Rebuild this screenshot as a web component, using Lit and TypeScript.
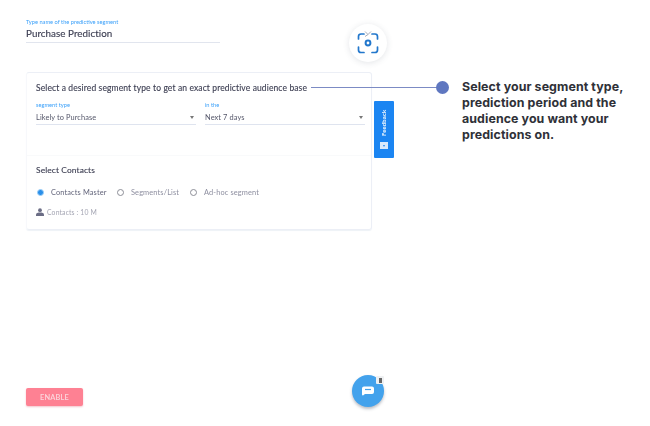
import { LitElement, html, css } from "lit";
import { customElement } from "lit/decorators.js";

@customElement("app-root")
export class AppRoot extends LitElement {
  static styles = css`
    :host { display: block; position: relative; width: 650px; height: 426px; overflow: hidden; background: #fff; font-family: "Lato", "Open Sans", sans-serif; }
    .main { box-sizing: border-box; height: 426px; width: 372px; padding: 19px 0 20px 26px; display: flex; flex-direction: column; }
    .name { width: 194px; border-bottom: 1px solid #e1e5ee; height: 23px; margin-bottom: 29px; filter: blur(0.35px); }
    .tiny { font-size: 5.7px; line-height: 6px; color: #3aa0fa; display: block; }
    .name b { display: block; font-weight: 400; font-size: 9.8px; line-height: 14px; margin-top: 1px; color: #3c3e52; letter-spacing: 0.05px; -webkit-text-stroke: 0.15px #3c3e52; }
    .card { box-sizing: border-box; width: 346px; height: 158px; border: 1px solid #eceff6; border-left-color: #f7f8fb; border-radius: 3px; box-shadow: 0 1px 1px #eef2f7; display: flex; flex-direction: column; filter: blur(0.35px); }
    .top { box-sizing: border-box; height: 83px; padding: 10px 7px 0 9px; border-bottom: 1px solid #f9fafb; }
    .title { font-size: 8.5px; line-height: 11px; color: #3c3e52; letter-spacing: 0.12px; white-space: nowrap; -webkit-text-stroke: 0.12px #3c3e52; }
    .fields { display: grid; grid-template-columns: 160px 160px; gap: 9px; margin-top: 8px; }
    .field { height: 22px; border-bottom: 1px solid #dfe4ef; }
    .value { display: flex; justify-content: space-between; align-items: center; font-size: 7.4px; line-height: 11px; color: #55576a; letter-spacing: 0.1px; margin-top: 4px; }
    .caret { width: 0; height: 0; border: 2.5px solid transparent; border-top: 3px solid #777; border-bottom: 0; margin-right: 2px; }
    .bottom { padding: 9px 9px 0 9px; }
    .sub { font-size: 8.4px; line-height: 11px; color: #3c3e52; letter-spacing: 0.12px; -webkit-text-stroke: 0.12px #3c3e52; }
    .radios { display: flex; align-items: center; margin: 10px 0 0 1px; height: 12px; font-size: 7.4px; color: #8e8fa0; letter-spacing: 0.13px; }
    .radio { box-sizing: border-box; width: 7px; height: 7px; border-radius: 50%; border: 1px solid #8b8d96; margin-right: 7px; flex: none; }
    .radio.on { border: 1.5px solid #9fd0f8; background: #2a8fe9; }
    .r1 { width: 55px; color: #62647a; white-space: nowrap; margin-right: 11px; }
    .r2 { width: 48px; white-space: nowrap; margin-right: 11px; }
    .contacts { display: flex; align-items: center; gap: 3px; margin-top: 8px; height: 12px; font-size: 6.8px; color: #a4a5b3; letter-spacing: 0.15px; }
    .enable { margin-top: auto; box-sizing: border-box; width: 57px; height: 18px; border: 0; border-radius: 2px; padding: 0; background: #fe8193; color: #fbd6dc; font: 600 7.4px "Lato", sans-serif; letter-spacing: 0.2px; box-shadow: 0 1px 2px #f3c5cc; filter: blur(0.3px); }
    .shot { position: absolute; left: 349px; top: 24px; width: 38px; height: 38px; border-radius: 50%; background: #fff; box-shadow: 0 1px 6px rgba(60, 70, 90, 0.14); display: flex; align-items: center; justify-content: center; }
    .feedback { position: absolute; left: 374px; top: 101px; box-sizing: border-box; width: 20px; height: 57px; background: #1b85f2; border-radius: 1px; display: flex; flex-direction: column; align-items: center; padding-top: 7px; }
    .feedback span { writing-mode: vertical-rl; transform: rotate(180deg); font: 900 5.8px "Lato", sans-serif; color: #eef6fe; letter-spacing: 0.2px; height: 29px; text-align: center; line-height: 8px; }
    .mail { width: 8px; height: 7px; background: #d9e9fb; margin-top: 5px; display: flex; justify-content: center; align-items: center; }
    .mail i { width: 0; height: 0; border: 1.5px solid transparent; border-top: 2px solid #1b85f2; border-bottom: 0; }
    .line { position: absolute; left: 311px; top: 87px; width: 127px; height: 1px; background: #7c8bc4; }
    .dot { position: absolute; left: 436px; top: 81px; width: 13px; height: 13px; border-radius: 50%; background: #5f77c0; }
    .callout { position: absolute; left: 462px; top: 79px; width: 180px; font: 700 12.4px/16px "Inter", "Open Sans", sans-serif; letter-spacing: 0.09px; color: #2f3138; }
    .fab { position: absolute; left: 352px; top: 375px; width: 32px; height: 32px; border-radius: 50%; background: #43a2ec; box-shadow: 0 2px 3px rgba(60, 70, 90, 0.35); display: flex; align-items: center; justify-content: center; }
    .close { position: absolute; right: 0; top: 1px; width: 8px; height: 8px; background: #eef0f2; border-radius: 1px; display: flex; align-items: center; justify-content: center; }
    .close i { display: block; width: 3px; height: 5px; background: #666; }
  `;

  render() {
    return html`
      <div class="main">
        <div class="name">
          <span class="tiny">Type name of the predictive segment</span>
          <b>Purchase Prediction</b>
        </div>
        <section class="card">
          <div class="top">
            <div class="title">Select a desired segment type to get an exact predictive audience base</div>
            <div class="fields">
              <div class="field">
                <span class="tiny">segment type</span>
                <div class="value">Likely to Purchase<i class="caret"></i></div>
              </div>
              <div class="field">
                <span class="tiny">in the</span>
                <div class="value">Next 7 days<i class="caret"></i></div>
              </div>
            </div>
          </div>
          <div class="bottom">
            <div class="sub">Select Contacts</div>
            <div class="radios">
              <i class="radio on"></i><span class="r1">Contacts Master</span>
              <i class="radio"></i><span class="r2">Segments/List</span>
              <i class="radio"></i><span>Ad-hoc segment</span>
            </div>
            <div class="contacts">
              <svg width="8" height="8" viewBox="0 0 8 8"><circle cx="4" cy="2.2" r="1.9" fill="#6b6d85"/><path d="M0 8V6.6C0 5.2 2 4.6 4 4.6S8 5.2 8 6.6V8Z" fill="#6b6d85"/></svg>
              Contacts : 10 M
            </div>
          </div>
        </section>
        <button class="enable">ENABLE</button>
      </div>

      <div class="shot">
        <svg width="22" height="24" viewBox="0 0 22 24" fill="none">
          <path d="M8 .5 11 3.500 14 .5M11 3.500 8 5.500" stroke="#a9adb8" stroke-width="1"/>
          <path d="M1.500 8V5.500Q1.500 3 4 3H7M15 3H18Q20.500 3 20.500 5.500V8M1.500 16V19Q1.500 21.500 4 21.500H7M15 21.500H18Q20.500 21.500 20.500 19V16" stroke="#2277cc" stroke-width="1.7" stroke-linecap="round"/>
          <circle cx="11" cy="12" r="2.400" stroke="#2277cc" stroke-width="2"/>
        </svg>
      </div>
      <div class="feedback"><span>Feedback</span><div class="mail"><i></i></div></div>
      <div class="line"></div>
      <div class="dot"></div>
      <div class="callout">Select your segment type, prediction period and the audience you want your predictions on.</div>
      <div class="fab">
        <svg width="14" height="12" viewBox="0 0 14 12"><path d="M3 1.500H11Q13 1.500 13 3.500V7Q13 9 11 9H4L2 10.500Q1 10.500 1 9.500V3.500Q1 1.500 3 1.500Z" fill="#fff"/><path d="M4 4.500H10" stroke="#43a2ec" stroke-width="1.200"/></svg>
        <div class="close"><i></i></div>
      </div>
    `;
  }
}
